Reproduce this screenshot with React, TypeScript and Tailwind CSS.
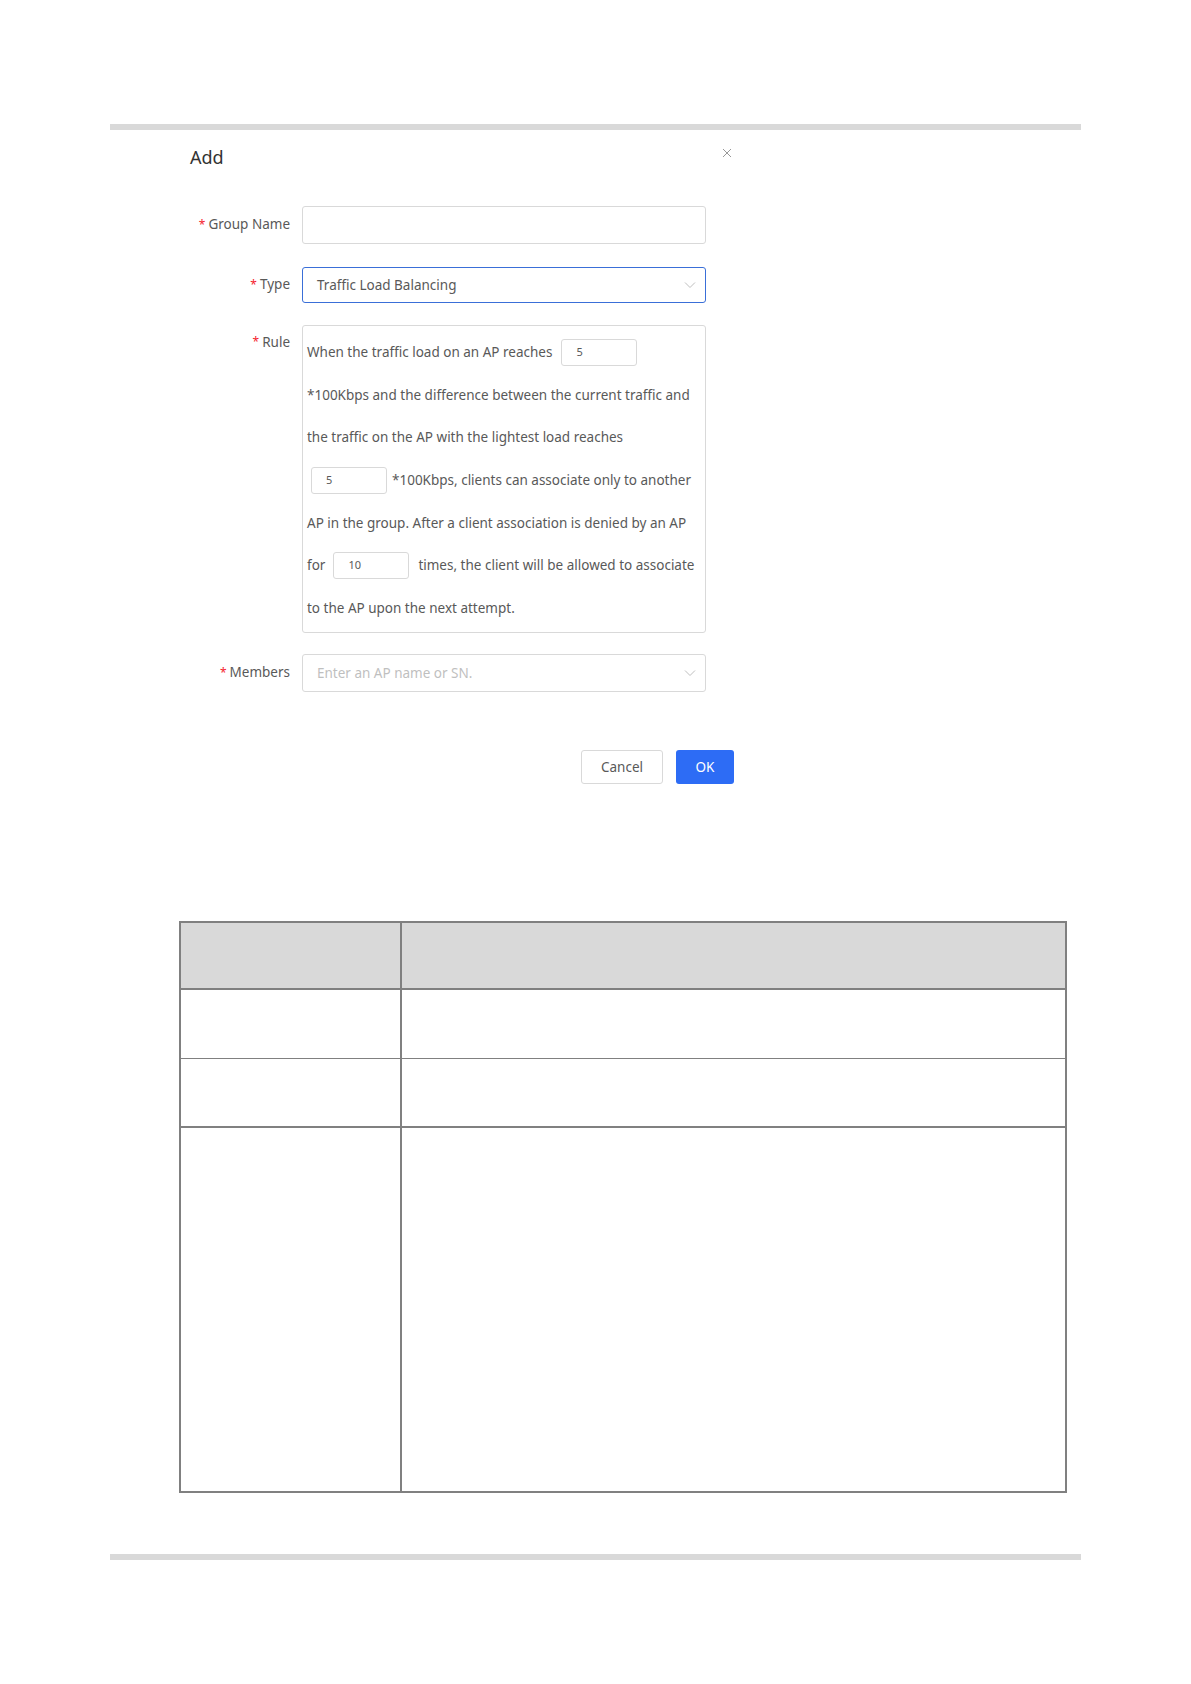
import React from "react";

const font = { fontFamily: '"Noto Sans", "Open Sans", Arial, sans-serif' };

function Chevron() {
  return (
    <svg width="12" height="8" viewBox="0 0 12 8" fill="none">
      <path d="M1 1.5 L6 6.5 L11 1.5" stroke="#bfbfbf" strokeWidth="1" />
    </svg>
  );
}

function SmallInput({ value }: { value: string }) {
  return (
    <div className="w-[76px] h-[27px] border border-[#d9d9d9] rounded-[3px] flex items-center pl-[14px] text-[11px] text-[#595959] bg-white">
      {value}
    </div>
  );
}

function Label({ text }: { text: string }) {
  return (
    <div className="w-[100px] flex justify-end items-center text-[13.5px] text-[#595959] leading-none">
      <span className="text-[#f5222d] mr-[3px] text-[12px]">*</span>
      {text}
    </div>
  );
}

function Line({ children }: { children: React.ReactNode }) {
  return <div className="h-[42.6px] flex items-center whitespace-nowrap">{children}</div>;
}

export default function App() {
  return (
    <div className="w-[1191px] h-[1684px] bg-white" style={font}>
      <div className="pt-[124px]">
        <div className="mx-[110px] h-[6px] bg-[#d9d9d9]" />

        <div className="ml-[190px] w-[544px]">
          <div className="flex justify-between items-start mt-[12px] h-[30px]">
            <div className="text-[18px] text-[#333333] leading-[30px]">Add</div>
            <svg width="10" height="10" viewBox="0 0 10 10" className="mt-[6px] mr-[2px]">
              <path d="M1 1 L9 9 M9 1 L1 9" stroke="#999999" strokeWidth="1" />
            </svg>
          </div>

          <div className="flex mt-[34px] h-[38px]">
            <Label text="Group Name" />
            <div className="ml-[12px] w-[404px] h-[38px] border border-[#d9d9d9] rounded-[3px] bg-white" />
          </div>

          <div className="flex mt-[23px] h-[36px]">
            <Label text="Type" />
            <div className="ml-[12px] w-[404px] h-[36px] border border-[#3a6fd8] rounded-[3px] bg-white flex items-center justify-between pl-[14px] pr-[9px]">
              <span className="text-[13.5px] text-[#595959]">Traffic Load Balancing</span>
              <Chevron />
            </div>
          </div>

          <div className="flex mt-[22px]">
            <div className="w-[100px] flex justify-end items-start pt-[11px] text-[13.5px] text-[#595959] leading-none">
              <span className="text-[#f5222d] mr-[3px] text-[12px]">*</span>
              Rule
            </div>
            <div className="ml-[12px] w-[404px] h-[308px] border border-[#d9d9d9] rounded-[3px] bg-white pt-[5px] pl-[4px] text-[13.5px] text-[#595959]">
              <Line>
                <span>When the traffic load on an AP reaches</span>
                <span className="ml-[9px]"><SmallInput value="5" /></span>
              </Line>
              <Line>*100Kbps and the difference between the current traffic and</Line>
              <Line>the traffic on the AP with the lightest load reaches</Line>
              <Line>
                <span className="ml-[4px]"><SmallInput value="5" /></span>
                <span className="ml-[5px]">*100Kbps, clients can associate only to another</span>
              </Line>
              <Line>AP in the group. After a client association is denied by an AP</Line>
              <Line>
                <span>for</span>
                <span className="ml-[8px]"><SmallInput value="10" /></span>
                <span className="ml-[9px]">times, the client will be allowed to associate</span>
              </Line>
              <Line>to the AP upon the next attempt.</Line>
            </div>
          </div>

          <div className="flex mt-[21px] h-[38px]">
            <Label text="Members" />
            <div className="ml-[12px] w-[404px] h-[38px] border border-[#d9d9d9] rounded-[3px] bg-white flex items-center justify-between pl-[14px] pr-[9px]">
              <span className="text-[13.5px] text-[#bfbfbf]">Enter an AP name or SN.</span>
              <Chevron />
            </div>
          </div>

          <div className="flex justify-end gap-[13px] mt-[58px]">
            <div className="w-[82px] h-[34px] border border-[#d9d9d9] rounded-[3px] bg-white flex items-center justify-center text-[13.5px] text-[#595959]">
              Cancel
            </div>
            <div className="w-[58px] h-[34px] rounded-[3px] bg-[#2d6cf5] flex items-center justify-center text-[13.5px] text-white">
              OK
            </div>
          </div>
        </div>

        <div className="ml-[179px] mt-[137px] w-[888px] border-2 border-[#808080]">
          <div className="flex h-[67px] bg-[#d9d9d9] border-b-2 border-[#808080]">
            <div className="w-[221px] border-r-2 border-[#808080]" />
            <div className="flex-1" />
          </div>
          <div className="flex h-[69px] border-b border-[#808080]">
            <div className="w-[221px] border-r-2 border-[#808080]" />
            <div className="flex-1" />
          </div>
          <div className="flex h-[69px] border-b-2 border-[#808080]">
            <div className="w-[221px] border-r-2 border-[#808080]" />
            <div className="flex-1" />
          </div>
          <div className="flex h-[363px]">
            <div className="w-[221px] border-r-2 border-[#808080]" />
            <div className="flex-1" />
          </div>
        </div>

        <div className="mx-[110px] mt-[61px] h-[6px] bg-[#d9d9d9]" />
      </div>
    </div>
  );
}
